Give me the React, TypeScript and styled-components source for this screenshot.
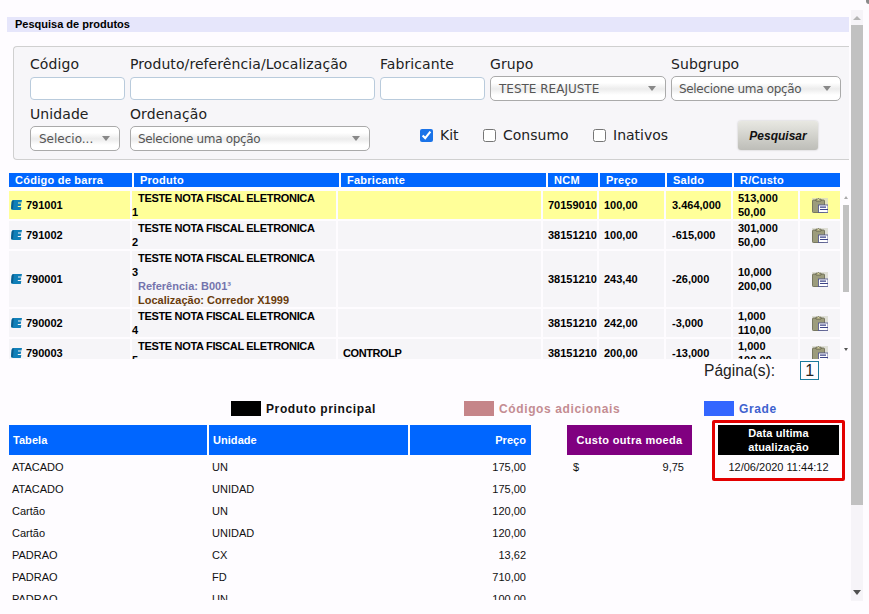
import React from "react";
import styled, { createGlobalStyle } from "styled-components";

const Global = createGlobalStyle`
  html, body { margin: 0; padding: 0; background: #fefcff; overflow: hidden; }
  * { box-sizing: border-box; }
`;

const Page = styled.div`
  position: relative; display: flex; width: 869px; height: 614px; overflow: hidden;
  background: #fefcff; font-family: "Liberation Sans", Arial, sans-serif; color: #000;
  &::after { content: ""; position: absolute; top: 0; right: 0; width: 3px; height: 4px; background: #8a8a8a; border-bottom-left-radius: 3px; }
`;
const Main = styled.main`
  width: 851px; height: 600px; padding: 17px 0 0 7px; overflow: hidden; flex: none;
`;
const TitleBar = styled.h1`
  margin: 0; height: 15px; width: 842px; background: #e6e6fb; padding-left: 8px;
  font-size: 11px; line-height: 15px; font-weight: bold;
`;
const Filters = styled.section`
  margin: 14px 0 0 6px; width: 836px; height: 114px; padding: 8px 0 0 16px;
  background: #f7f6f9; border: 1px solid #d0d0d0; border-right: none; border-radius: 4px 0 0 4px;
  font-family: "DejaVu Sans", Verdana, sans-serif;
`;
const FilterRow = styled.div`
  display: flex; gap: ${p => p.$gap ?? 5}px; align-items: flex-start; height: ${p => p.$h}px;
`;
const Field = styled.div`
  display: flex; flex-direction: column; width: ${p => p.$w}px; flex: none;
`;
const Label = styled.label`
  font-size: 14px; line-height: 18px; height: 22px; color: #222; white-space: nowrap; letter-spacing: .08px;
`;
const TextInput = styled.input`
  height: 23px; width: 100%; background: #fff; border: 1px solid #b9cbdc; border-radius: 4px; padding: 0 4px;
`;
const Select = styled.div`
  display: flex; align-items: center; justify-content: space-between; height: 25px; width: 100%;
  margin-top: -1px; padding: 0 9px 0 ${p => p.$tight ? 7 : 8}px; border: 1px solid #aaa; border-radius: 5px;
  background: linear-gradient(#fff 25%, #ececec 52%, #fff 78%);
  font-size: 12px; color: #555; white-space: nowrap; letter-spacing: ${p => p.$tight ? "-.33px" : "0"};
`;
const Arrow = styled.i`
  width: 0; height: 0; border-left: 4px solid transparent; border-right: 4px solid transparent;
  border-top: 5px solid #888;
`;
const Checks = styled.div`
  display: flex; margin: 21px 0 0 40px; width: 308px; flex: none;
`;
const Check = styled.label`
  display: flex; align-items: center; gap: 7px; width: ${p => p.$w}px; flex: none;
  font-size: 14px; color: #222; height: 18px;
`;
const CheckBox = styled.input`
  width: 13px; height: 13px; margin: 0; accent-color: #1a73e8;
`;
const SearchButton = styled.button`
  width: 80px; height: 29px; margin-top: 16px; flex: none; border: none; border-radius: 3px; padding: 0;
  background: linear-gradient(#e8e8e2, #bdbdb8);
  box-shadow: 0 0 2px #bbb;
  font: italic bold 12px "Liberation Sans", Arial, sans-serif; color: #111;
`;

const GridHead = styled.div`
  display: grid; grid-template-columns: 123px 205px 205px 50px 65px 65px 106px; gap: 2px;
  margin: 13px 0 0 2px; width: 831px;
`;
const HeadCell = styled.div`
  height: 14px; background: #0066ff; color: #fff; font-size: 11px; font-weight: bold; line-height: 14px;
  padding-left: 6px; letter-spacing: .25px; white-space: nowrap;
`;
const ScrollArea = styled.div`
  display: flex; margin: 3px 0 0 2px; height: 169px; overflow: hidden; width: 841px;
`;
const Rows = styled.div`
  display: flex; flex-direction: column; gap: 2px; width: 831px; padding-top: 1px; flex: none; overflow: hidden;
`;
const Row = styled.div`
  display: grid; grid-template-columns: 121px 204px 203px 54px 65px 65px 65px 40px; gap: 2px; flex: none;
`;
const Cell = styled.div`
  display: flex; flex-direction: ${p => p.$col ? "column" : "row"};
  align-items: ${p => p.$col ? "flex-start" : "center"};
  justify-content: ${p => p.$center || p.$col ? "center" : "flex-start"};
  padding-left: ${p => p.$pad ?? 0}px;
  background: ${p => p.$hl ? "#ffff99" : "#f6f5f8"};
  font-size: 11px; font-weight: bold; line-height: 14px; white-space: nowrap;
`;
const ProductName = styled.span`
  display: block; padding-left: 6px; letter-spacing: -.32px;
`;
const Ref = styled.span`
  display: block; padding-left: 6px; color: #7474ad;
`;
const Loc = styled.span`
  display: block; padding-left: 6px; color: #6a3c0c;
`;
const Maker = styled.span`
  letter-spacing: -.4px;
`;
const BarCode = styled.span`
  margin-left: 4px;
`;
const MiniScroll = styled.div`
  display: flex; flex-direction: column; align-items: center; width: 8px; margin-left: 2px; padding-top: 6px; flex: none;
`;
const MiniArrow = styled.i`
  width: 0; height: 0; border-left: 2px solid transparent; border-right: 2px solid transparent;
  ${p => p.$up ? "border-bottom: 3px solid #aaa;" : "border-top: 3px solid #555; margin-top: 56px;"}
`;
const MiniThumb = styled.div`
  width: 6px; height: 87px; margin-top: 6px; background: #c1c1c1;
`;
const Pager = styled.div`
  display: flex; align-items: center; height: 19px; margin: 2px 0 0 697px; font-size: 15.6px; color: #222;
`;
const PageBox = styled.span`
  width: 19px; height: 19px; margin-left: 25px; border: 1px solid #1b7a9c; font-size: 16px; line-height: 17px; text-align: center;
`;
const Legend = styled.div`
  display: flex; height: 15px; margin: 21px 0 0 224px; align-items: center;
`;
const LegendItem = styled.div`
  display: flex; align-items: center; gap: 5px; width: ${p => p.$w}px; flex: none;
  font-size: 12px; font-weight: bold; letter-spacing: .62px; color: ${p => p.$text};
  &::before { content: ""; width: 30px; height: 15px; background: ${p => p.$box}; flex: none; }
`;
const Lower = styled.div`
  display: flex; align-items: flex-start; margin: 4px 0 0 2px; padding-top: 5px; height: 181px; overflow: hidden;
`;
const PriceTable = styled.div`
  display: grid; grid-template-columns: 198px 199px 121px; column-gap: 2px;
  grid-template-rows: 31px; grid-auto-rows: 22px; width: 522px; flex: none;
`;
const PriceHead = styled.div`
  height: 30px; background: #0066ff; color: #fff;
  display: flex; align-items: center; justify-content: ${p => p.$right ? "flex-end" : "flex-start"};
  padding: 0 ${p => p.$right ? 5 : 0}px 0 ${p => p.$right ? 0 : 4}px;
  font-size: 11px; font-weight: bold; letter-spacing: .05px;
`;
const PriceCell = styled.div`
  display: flex; align-items: center; font-size: 11px; color: #111; height: 22px; white-space: nowrap;
  justify-content: ${p => p.$right ? "flex-end" : "flex-start"};
  padding: 0 ${p => p.$right ? 5 : 0}px 0 ${p => p.$right ? 0 : 3}px;
`;
const Cost = styled.div`
  width: 125px; margin-left: 36px; flex: none;
`;
const CostHead = styled.div`
  height: 30px; background: #800080; color: #fff; display: flex; align-items: center; justify-content: center;
  font-size: 11px; font-weight: bold; letter-spacing: .35px;
`;
const CostRow = styled.div`
  display: flex; justify-content: space-between; padding: 0 8px 0 6px; height: 22px; margin-top: 1px; align-items: center; font-size: 11px; color: #111;
`;
const Updated = styled.div`
  width: 133px; height: 61px; margin: -5px 0 0 20px; padding: 2px 3px 0; flex: none;
  border: 3px solid #e30000; border-radius: 2px; background: #fefcff;
`;
const UpdatedHead = styled.div`
  height: 30px; background: #000; color: #fff; text-align: center;
  font-size: 11px; line-height: 14px; font-weight: bold; letter-spacing: .1px; padding-top: 1px;
`;
const UpdatedValue = styled.div`
  height: 24px; text-align: center; font-size: 11px; line-height: 24px; color: #111;
`;
const PageScroll = styled.div`
  display: flex; flex-direction: column; align-items: center; width: 12px; height: 591px; margin-top: 10px; flex: none; background: #f6f4f8;
`;
const ScrollUp = styled.i`
  width: 0; height: 0; margin-top: 6px; border-left: 4px solid transparent; border-right: 4px solid transparent; border-bottom: 4px solid #b5b5b5;
`;
const ScrollThumb = styled.div`
  width: 12px; height: 480px; margin-top: 5px; background: #c1c1c1;
`;
const ScrollDown = styled.i`
  width: 0; height: 0; margin-top: 85px; border-left: 4px solid transparent; border-right: 4px solid transparent; border-top: 5px solid #505050;
`;

const EIcon = () => (
  <svg width="11" height="10" viewBox="0 0 11 10" aria-hidden="true" style={{ marginLeft: 2, flex: "none" }}>
    <path d="M2.4 0H11L10.5 2.4H7V3.4H10.2L9.7 5.9H6.8V7H10.3L9.8 10H2.2C0.7 10 0 9 0 8L0.6 2C0.7 0.8 1.3 0 2.4 0Z" fill="#0f7fb8" />
    <path d="M0.2 8.4L0.7 2.1C0.8 1 1.3 0.4 2.2 0.4L2.8 0.4L2 8.8L0.8 9.5Z" fill="#0a5d8e" />
  </svg>
);

const ClipIcon = () => (
  <svg width="16" height="15" viewBox="0 0 16 15" aria-hidden="true">
    <rect width="16" height="15" fill="#d6d5c8" opacity="0.7" />
    <rect x="0.5" y="2" width="12" height="12.5" rx="1" fill="#9c9c7c" stroke="#66664f" strokeWidth="0.8" />
    <path d="M4 3V1.2H5.5L6.4 0.3L7.4 1.2H9V3Z" fill="#d6d2a0" stroke="#55553f" strokeWidth="0.7" />
    <rect x="6.5" y="7" width="9.5" height="7.5" fill="#fff" stroke="#4a4f8a" strokeWidth="0.8" />
    <path d="M8 9.2H14M8 11.5H16" stroke="#3d4488" strokeWidth="1.2" />
  </svg>
);

type Item = { code: string; n: string; ref?: string; loc?: string; fab?: string; ncm: string; price: string; stock: string; r: string[]; hl?: boolean };
const items: Item[] = [
  { code: "791001", n: "1", ncm: "70159010", price: "100,00", stock: "3.464,000", r: ["513,000", "50,00"], hl: true },
  { code: "791002", n: "2", ncm: "38151210", price: "100,00", stock: "-615,000", r: ["301,000", "50,00"] },
  { code: "790001", n: "3", ref: "Referência: B001³", loc: "Localização: Corredor X1999", ncm: "38151210", price: "243,40", stock: "-26,000", r: ["10,000", "200,00"] },
  { code: "790002", n: "4", ncm: "38151210", price: "242,00", stock: "-3,000", r: ["1,000", "110,00"] },
  { code: "790003", n: "5", fab: "CONTROLP", ncm: "38151210", price: "200,00", stock: "-13,000", r: ["1,000", "100,00"] },
];

const prices = [
  ["ATACADO", "UN", "175,00"], ["ATACADO", "UNIDAD", "175,00"], ["Cartão", "UN", "120,00"], ["Cartão", "UNIDAD", "120,00"],
  ["PADRAO", "CX", "13,62"], ["PADRAO", "FD", "710,00"], ["PADRAO", "UN", "100,00"],
];

export default function App() {
  return (
    <Page>
      <Global />
      <Main>
        <TitleBar>Pesquisa de produtos</TitleBar>
        <Filters>
          <FilterRow $h={50}>
            <Field $w={95}><Label>Código</Label><TextInput /></Field>
            <Field $w={245}><Label>Produto/referência/Localização</Label><TextInput /></Field>
            <Field $w={105}><Label>Fabricante</Label><TextInput /></Field>
            <Field $w={176}><Label>Grupo</Label><Select>TESTE REAJUSTE<Arrow /></Select></Field>
            <Field $w={170}><Label>Subgrupo</Label><Select $tight>Selecione uma opção<Arrow /></Select></Field>
          </FilterRow>
          <FilterRow $gap={10} $h={50}>
            <Field $w={90}><Label>Unidade</Label><Select>Selecio...<Arrow /></Select></Field>
            <Field $w={240}><Label>Ordenação</Label><Select $tight>Selecione uma opção<Arrow /></Select></Field>
            <Checks>
              <Check $w={63}><CheckBox type="checkbox" defaultChecked />Kit</Check>
              <Check $w={110}><CheckBox type="checkbox" />Consumo</Check>
              <Check $w={120}><CheckBox type="checkbox" />Inativos</Check>
            </Checks>
            <SearchButton>Pesquisar</SearchButton>
          </FilterRow>
        </Filters>
        <GridHead>
          {["Código de barra", "Produto", "Fabricante", "NCM", "Preço", "Saldo", "R/Custo"].map(h => <HeadCell key={h}>{h}</HeadCell>)}
        </GridHead>
        <ScrollArea>
          <Rows>
            {items.map(it => (
              <Row key={it.code}>
                <Cell $hl={it.hl}><EIcon /><BarCode>{it.code}</BarCode></Cell>
                <Cell $hl={it.hl} $col>
                  <ProductName>TESTE NOTA FISCAL ELETRONICA</ProductName>
                  {it.n}
                  {it.ref && <Ref>{it.ref}</Ref>}
                  {it.loc && <Loc>{it.loc}</Loc>}
                </Cell>
                <Cell $hl={it.hl} $pad={5}><Maker>{it.fab}</Maker></Cell>
                <Cell $hl={it.hl} $pad={5}>{it.ncm}</Cell>
                <Cell $hl={it.hl} $pad={5}>{it.price}</Cell>
                <Cell $hl={it.hl} $pad={6}>{it.stock}</Cell>
                <Cell $hl={it.hl} $col $pad={5}>{it.r.map(v => <span key={v}>{v}</span>)}</Cell>
                <Cell $hl={it.hl} $center><ClipIcon /></Cell>
              </Row>
            ))}
          </Rows>
          <MiniScroll><MiniArrow $up /><MiniThumb /><MiniArrow /></MiniScroll>
        </ScrollArea>
        <Pager>Página(s):<PageBox>1</PageBox></Pager>
        <Legend>
          <LegendItem $w={233} $box="#000" $text="#111">Produto principal</LegendItem>
          <LegendItem $w={240} $box="#c58589" $text="#c48c92">Códigos adicionais</LegendItem>
          <LegendItem $w={80} $box="#3366ff" $text="#3f62cf">Grade</LegendItem>
        </Legend>
        <Lower>
          <PriceTable>
            <PriceHead>Tabela</PriceHead>
            <PriceHead>Unidade</PriceHead>
            <PriceHead $right>Preço</PriceHead>
            {prices.map((p, i) => (
              <React.Fragment key={i}>
                <PriceCell>{p[0]}</PriceCell>
                <PriceCell>{p[1]}</PriceCell>
                <PriceCell $right>{p[2]}</PriceCell>
              </React.Fragment>
            ))}
          </PriceTable>
          <Cost>
            <CostHead>Custo outra moeda</CostHead>
            <CostRow><span>$</span><span>9,75</span></CostRow>
          </Cost>
          <Updated>
            <UpdatedHead>Data ultima<br />atualização</UpdatedHead>
            <UpdatedValue>12/06/2020 11:44:12</UpdatedValue>
          </Updated>
        </Lower>
      </Main>
      <PageScroll><ScrollUp /><ScrollThumb /><ScrollDown /></PageScroll>
    </Page>
  );
}
